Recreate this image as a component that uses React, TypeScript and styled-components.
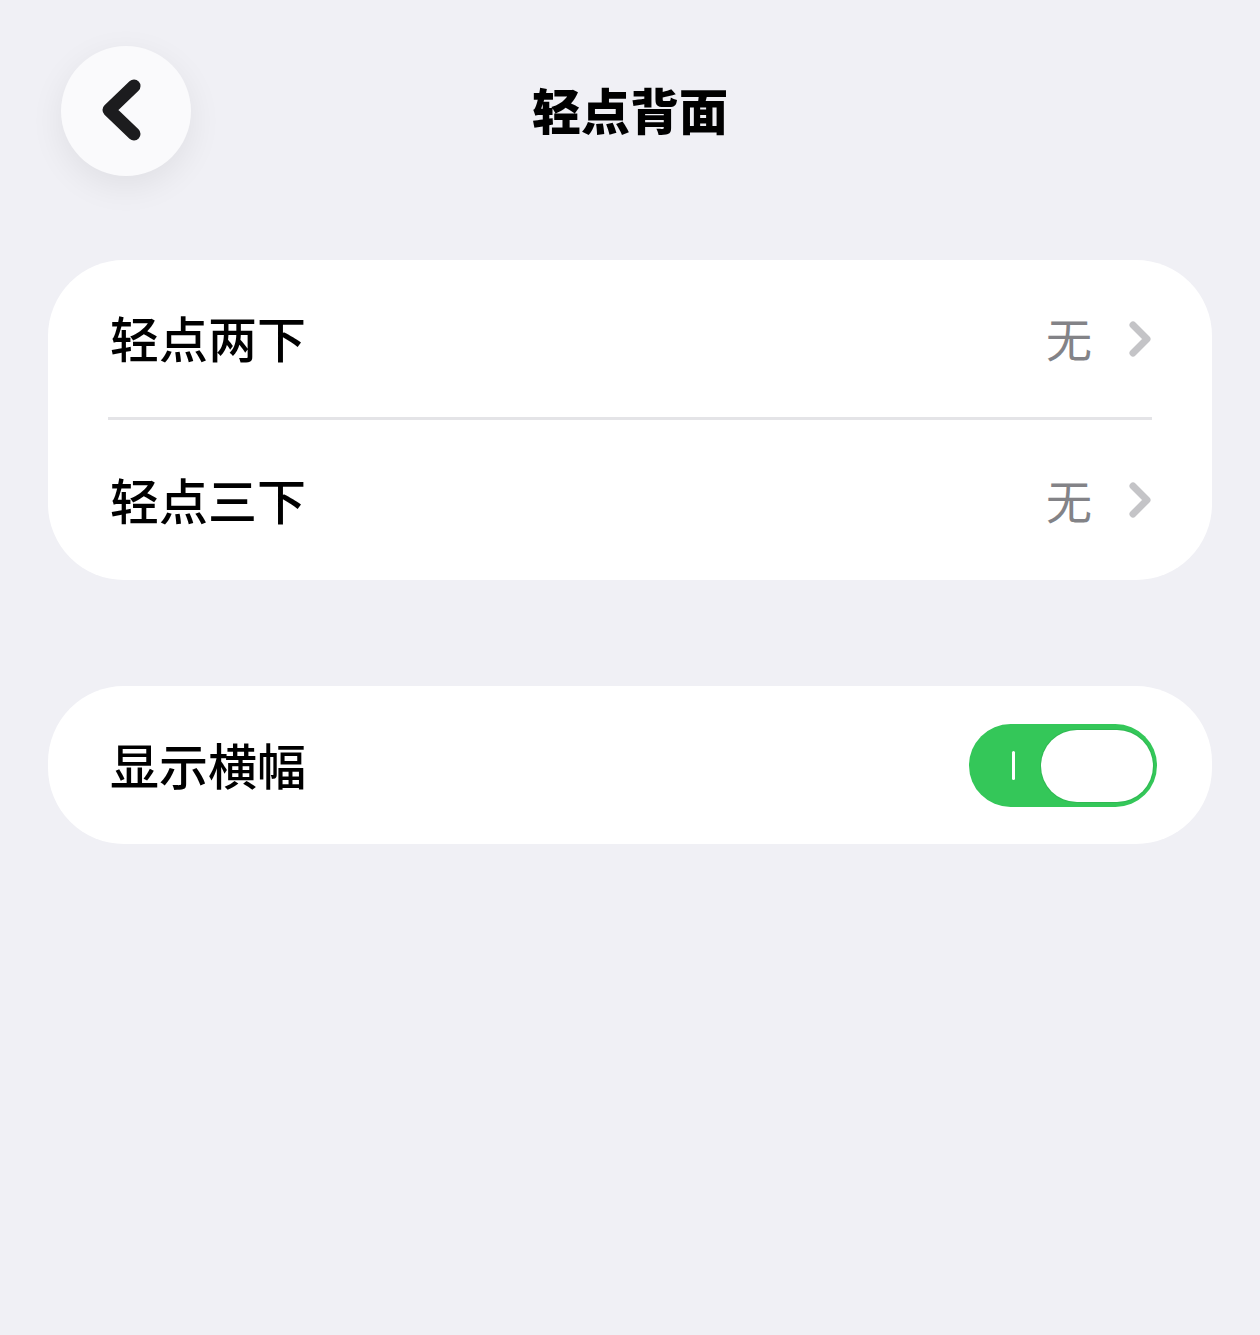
import React from "react";
import styled, { createGlobalStyle } from "styled-components";

const GlobalStyle = createGlobalStyle`
  html, body {
    margin: 0;
    padding: 0;
    background: #f0f0f5;
  }
  body {
    font-family: "Noto Sans CJK SC", "Noto Sans", sans-serif;
    color: #000;
  }
`;

const Page = styled.div`
  min-height: 1335px;
  background: #f0f0f5;
  padding: 0 48px;
  box-sizing: border-box;
`;

const Header = styled.header`
  display: grid;
  grid-template-columns: 1fr auto 1fr;
  align-items: center;
  padding-top: 46px;
  margin: 0 -48px;
`;

const BackButton = styled.button`
  width: 130px;
  height: 130px;
  margin-left: 61px;
  border: none;
  border-radius: 50%;
  background: #fafafc;
  box-shadow: 0 10px 34px rgba(0, 0, 0, 0.07);
  display: flex;
  align-items: center;
  justify-content: center;
  padding: 0 10px 0 0;
  cursor: pointer;
`;

const Title = styled.h1`
  margin: -6px 0 0;
  font-size: 49px;
  line-height: 1;
  font-weight: 900;
  letter-spacing: 0;
  color: #000;
`;

const Card = styled.section<{ $top: number }>`
  margin-top: ${(p) => p.$top}px;
  background: #fff;
  border-radius: 76px;
  overflow: hidden;
`;

const Row = styled.div<{ $height: number }>`
  height: ${(p) => p.$height}px;
  display: flex;
  align-items: center;
  justify-content: space-between;
  padding: 0 60px 0 62px;
`;

const Label = styled.span`
  margin-top: -4px;
  font-size: 49px;
  line-height: 1;
  font-weight: 500;
  color: #000;
`;

const Detail = styled.div`
  display: flex;
  align-items: center;
  gap: 36px;
`;

const Value = styled.span`
  margin-top: -3px;
  font-size: 46px;
  line-height: 1;
  font-weight: 400;
  color: #838387;
`;

const Divider = styled.div`
  height: 3px;
  margin: 0 60px;
  background: #e4e4e7;
`;

const Track = styled.div<{ $on: boolean }>`
  position: relative;
  width: 188px;
  height: 83px;
  border-radius: 42px;
  background: ${(p) => (p.$on ? "#34c759" : "#e9e9eb")};
  margin-right: -5px;
  flex-shrink: 0;
`;

const OnMark = styled.span`
  position: absolute;
  left: 43px;
  top: 27px;
  width: 3px;
  height: 29px;
  border-radius: 2px;
  background: #fff;
`;

const Knob = styled.span<{ $on: boolean }>`
  position: absolute;
  top: 6px;
  bottom: 5px;
  ${(p) => (p.$on ? "right: 4px;" : "left: 4px;")}
  width: 112px;
  border-radius: 40px;
  background: #fff;
  box-shadow: 0 0 0 1px rgba(40, 160, 70, 0.35);
`;

const Chevron = () => (
  <svg width="24" height="38" viewBox="0 0 24 38" fill="none">
    <path
      d="M5 5 L19 19 L5 33"
      stroke="#c4c4c7"
      strokeWidth="7"
      strokeLinecap="round"
      strokeLinejoin="round"
    />
  </svg>
);

const BackIcon = () => (
  <svg width="44" height="68" viewBox="0 0 44 68" fill="none">
    <path
      d="M35 9 L10 33 L35 57"
      stroke="#1c1c1e"
      strokeWidth="13"
      strokeLinecap="round"
      strokeLinejoin="round"
    />
  </svg>
);

const Switch = ({ on }: { on: boolean }) => (
  <Track $on={on} role="switch" aria-checked={on}>
    {on && <OnMark />}
    <Knob $on={on} />
  </Track>
);

const tapRows = [
  { label: "轻点两下", value: "无" },
  { label: "轻点三下", value: "无" },
];

export default function App() {
  return (
    <>
      <GlobalStyle />
      <Page>
        <Header>
          <div>
            <BackButton aria-label="返回">
              <BackIcon />
            </BackButton>
          </div>
          <Title>轻点背面</Title>
          <div />
        </Header>

        <Card $top={84}>
          {tapRows.map((row, i) => (
            <React.Fragment key={row.label}>
              {i > 0 && <Divider />}
              <Row $height={i === 0 ? 157 : 160}>
                <Label>{row.label}</Label>
                <Detail>
                  <Value>{row.value}</Value>
                  <Chevron />
                </Detail>
              </Row>
            </React.Fragment>
          ))}
        </Card>

        <Card $top={106}>
          <Row $height={158}>
            <Label>显示横幅</Label>
            <Switch on={true} />
          </Row>
        </Card>
      </Page>
    </>
  );
}
